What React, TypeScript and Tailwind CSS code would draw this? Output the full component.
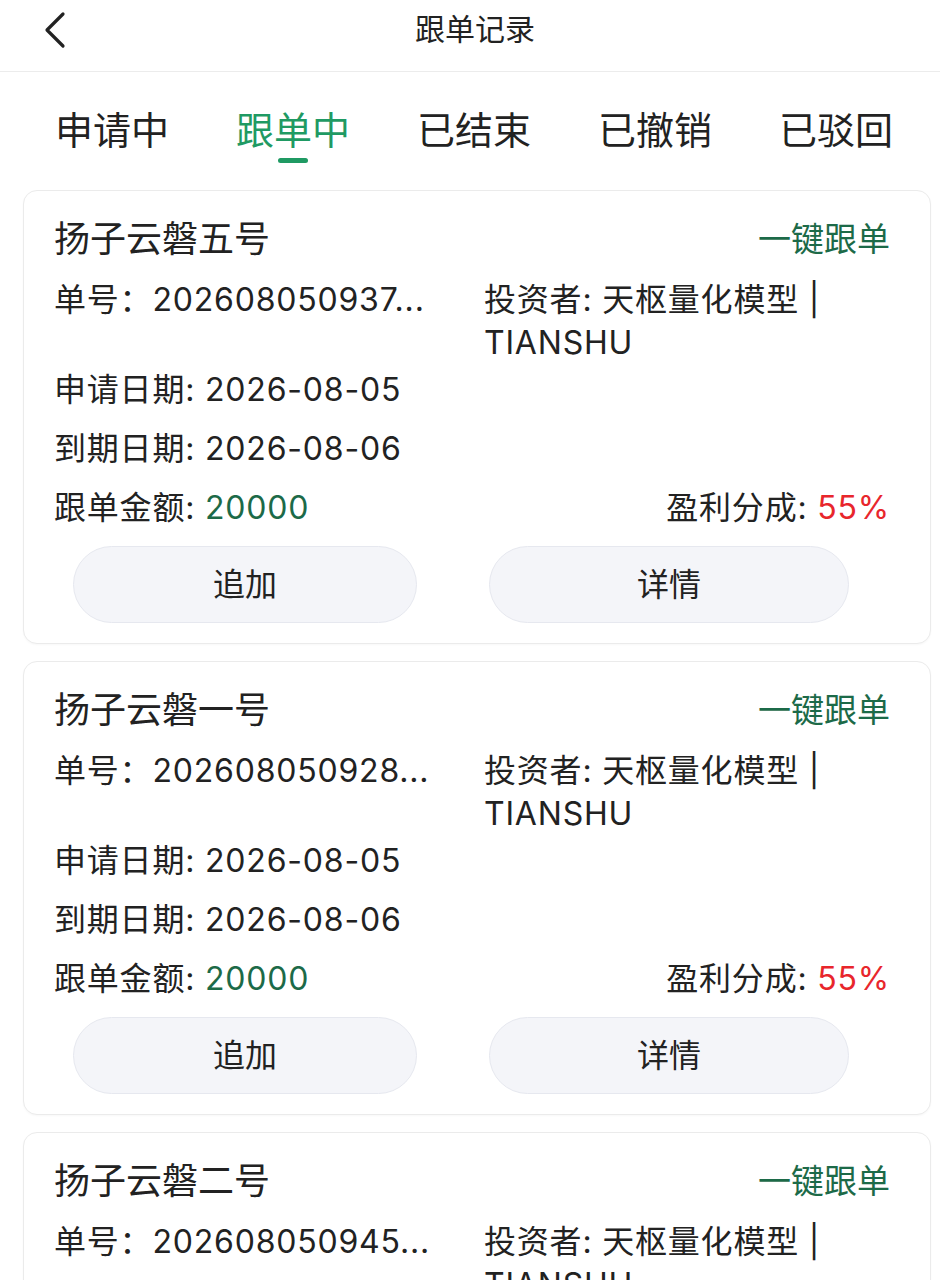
import React from 'react';

const orders = [
  { name: '扬子云磐五号', no: '202608050937...' },
  { name: '扬子云磐一号', no: '202608050928...' },
  { name: '扬子云磐二号', no: '202608050945...' },
];

const tabs = ['申请中', '跟单中', '已结束', '已撤销', '已驳回'];

const OrderCard = ({ name, no }: { name: string; no: string }) => (
  <div className="rounded-[14px] border border-[#ebebeb] bg-white pl-[30px] pr-[40px] pt-[24px] pb-[20px] shadow-[0_1px_2px_rgba(0,0,0,0.03)]">
    {/* title row */}
    <div className="flex items-center justify-between leading-[48px]">
      <span className="text-[36px] text-[#222]">{name}</span>
      <span className="text-[33px] text-[#1c6a48]">一键跟单</span>
    </div>

    <div className="mt-[15px] grid grid-cols-[430px_1fr] text-[32px] leading-[43px] tracking-[0.8px] text-[#222]">
      <div>单号：{no}</div>
      <div>投资者: 天枢量化模型 | TIANSHU</div>
    </div>

    <div className="mt-[4px] flex flex-col gap-[15px] text-[32px] leading-[44px] tracking-[0.8px] text-[#222]">
      <div>申请日期: 2026-08-05</div>
      <div>到期日期: 2026-08-06</div>
      <div className="flex justify-between">
        <span>
          跟单金额: <span className="text-[#1c6a48]">20000</span>
        </span>
        <span>
          盈利分成: <span className="text-[#e8262c]">55%</span>
        </span>
      </div>
      <div className="ml-[19px] mt-[1px] flex gap-[72px] tracking-normal">
        <button className="h-[77px] w-[344px] rounded-full border border-[#e6e8ef] bg-[#f4f5f9] text-[32px] text-[#222]">
          追加
        </button>
        <button className="h-[77px] w-[360px] rounded-full border border-[#e6e8ef] bg-[#f4f5f9] text-[32px] text-[#222]">
          详情
        </button>
      </div>
    </div>
  </div>
);

export default function App() {
  return (
    <div
      className="h-[1280px] w-[940px] overflow-hidden bg-white"
      style={{ fontFamily: 'Inter, "Noto Sans CJK SC", sans-serif' }}
    >
      {/* header */}
      <div className="relative flex h-[72px] items-center justify-center border-b border-[#ececec] pb-[12px]">
        <svg
          className="absolute left-[40px] top-[11px]"
          width="30"
          height="38"
          viewBox="0 0 30 38"
          fill="none"
          stroke="#222"
          strokeWidth="3.2"
          strokeLinecap="round"
          strokeLinejoin="round"
        >
          <path d="M23 3L7 19L23 35" />
        </svg>
        <span className="ml-[10px] text-[30px] text-[#222]">跟单记录</span>
      </div>

      {/* tabs */}
      <div className="flex justify-between pl-[55px] pr-[47px] pt-[34px]">
        {tabs.map((t) => {
          const active = t === '跟单中';
          return (
            <div key={t} className="flex flex-col items-center">
              <span className={`text-[38px] leading-[48px] ${active ? 'text-[#1f9a63]' : 'text-[#222]'}`}>{t}</span>
              <span className={`mt-[4px] h-[5px] w-[30px] rounded-full ${active ? 'bg-[#1f9a63]' : 'bg-transparent'}`} />
            </div>
          );
        })}
      </div>

      {/* list */}
      <div className="mt-[27px] flex flex-col gap-[17px] pl-[23px] pr-[9px]">
        {orders.map((o) => (
          <OrderCard key={o.no} name={o.name} no={o.no} />
        ))}
      </div>
    </div>
  );
}
